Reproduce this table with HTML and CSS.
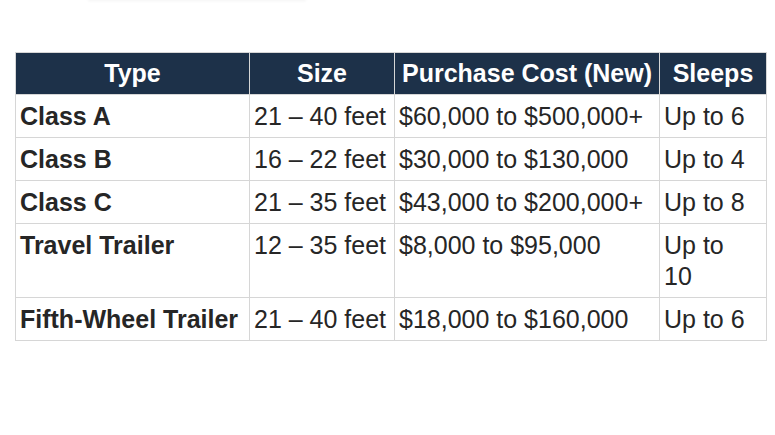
FILE: index.html
```html
<!DOCTYPE html>
<html lang="en">
<head>
<meta charset="utf-8">
<title>RV Types</title>
<link rel="stylesheet" href="styles.css">
</head>
<body>
<div class="top-bar"></div>
<table class="rv-table">
  <colgroup>
    <col class="c-type">
    <col class="c-size">
    <col class="c-cost">
    <col class="c-sleeps">
  </colgroup>
  <thead>
    <tr>
      <th>Type</th>
      <th>Size</th>
      <th>Purchase Cost (New)</th>
      <th>Sleeps</th>
    </tr>
  </thead>
  <tbody>
    <tr>
      <td class="type">Class A</td>
      <td>21 – 40 feet</td>
      <td>$60,000 to $500,000+</td>
      <td>Up to 6</td>
    </tr>
    <tr>
      <td class="type">Class B</td>
      <td>16 – 22 feet</td>
      <td>$30,000 to $130,000</td>
      <td>Up to 4</td>
    </tr>
    <tr>
      <td class="type">Class C</td>
      <td>21 – 35 feet</td>
      <td>$43,000 to $200,000+</td>
      <td>Up to 8</td>
    </tr>
    <tr>
      <td class="type">Travel Trailer</td>
      <td>12 – 35 feet</td>
      <td>$8,000 to $95,000</td>
      <td>Up to<br>10</td>
    </tr>
    <tr>
      <td class="type">Fifth-Wheel Trailer</td>
      <td>21 – 40 feet</td>
      <td>$18,000 to $160,000</td>
      <td>Up to 6</td>
    </tr>
  </tbody>
</table>
</body>
</html>
```
FILE: styles.css
```css
html, body {
  margin: 0;
  padding: 0;
  background: #ffffff;
}

body {
  font-family: "Liberation Sans", Arial, Helvetica, sans-serif;
  color: #262626;
}

.top-bar {
  width: 216px;
  height: 0;
  margin-left: 89px;
  box-shadow: 0 0 3px 1px rgba(0, 0, 0, 0.06);
}

.rv-table {
  margin: 52px 0 0 15px;
  width: 751px;
  border-collapse: collapse;
  table-layout: fixed;
  font-size: 25px;
}

.c-type { width: 234px; }
.c-size { width: 145px; }
.c-cost { width: 265px; }
.c-sleeps { width: 107px; }

.rv-table th,
.rv-table td {
  border: 1px solid #d6d6d6;
  vertical-align: top;
  text-align: left;
  white-space: nowrap;
  overflow: visible;
}

.rv-table th {
  background: #1d3149;
  color: #ffffff;
  font-weight: bold;
  text-align: center;
  line-height: 30px;
  padding: 5px 2px 6px;
  border-color: #d6d6d6;
}

.rv-table td {
  line-height: 31px;
  padding: 6px 4px 5px 4px;
}

.rv-table td.type {
  font-weight: bold;
}
```
